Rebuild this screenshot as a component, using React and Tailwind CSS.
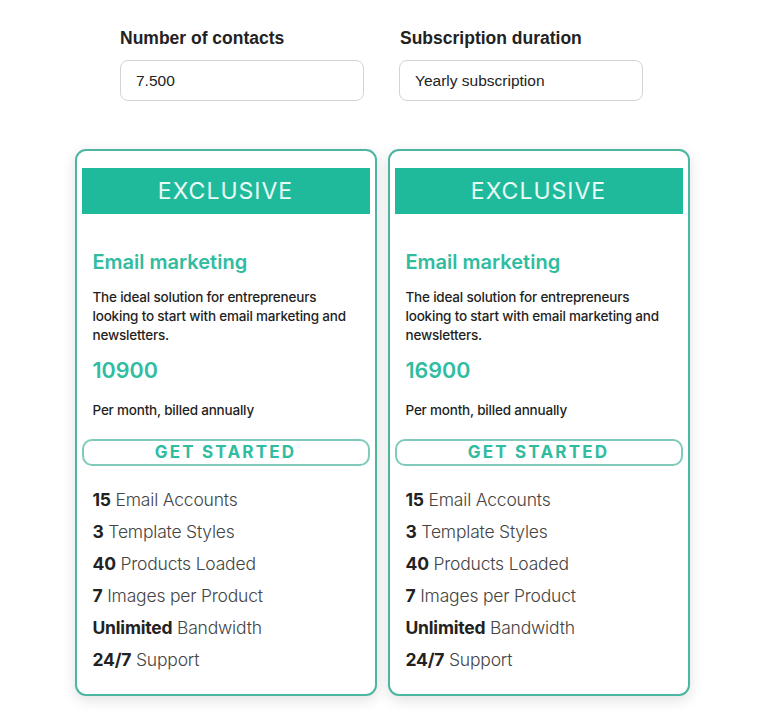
import React, { useState } from "react";

const plans = [
  { id: 1, price: "10900" },
  { id: 2, price: "16900" },
];

const features = [
  { strong: "15", text: "Email Accounts" },
  { strong: "3", text: "Template Styles" },
  { strong: "40", text: "Products Loaded" },
  { strong: "7", text: "Images per Product" },
  { strong: "Unlimited", text: "Bandwidth" },
  { strong: "24/7", text: "Support" },
];

const PlanCard = ({ price }) => (
  <div className="w-[302px] h-[547px] rounded-[11px] border-2 border-[#4db6a0] bg-white shadow-[0_4px_14px_rgba(0,0,0,0.12)] px-[5px] pt-[17px] font-['Inter',sans-serif]">
    <div className="h-[46px] bg-[#1fba9b] flex items-center justify-center text-[23px] tracking-[1px] text-[#e8fbf5]">
      EXCLUSIVE
    </div>

    <div className="px-[11px]">
      <h3 className="mt-[36px] text-[20px] leading-[24px] font-semibold text-[#2fbc9f]">
        Email marketing
      </h3>
      <p className="mt-[14px] w-[268px] text-[13.5px] leading-[19px] font-medium text-[#1f1f1f] tracking-[-0.2px]">
        The ideal solution for entrepreneurs looking to start with email
        marketing and newsletters.
      </p>
      <div className="mt-[12px] text-[21.5px] leading-[26px] font-semibold text-[#2fbc9f]">
        {price}
      </div>
      <div className="mt-[18px] text-[13.5px] leading-[18px] font-medium text-[#1f1f1f] tracking-[-0.2px]">
        Per month, billed annually
      </div>
    </div>

    <button className="mt-[20px] w-full h-[27px] rounded-[10px] border-2 border-[#7fcabb] flex items-center justify-center text-[17px] font-bold tracking-[2.2px] text-[#2fbc9f]">
      GET STARTED
    </button>

    <ul className="mt-[22px] px-[11px] flex flex-col gap-[9px]">
      {features.map((f) => (
        <li
          key={f.text}
          className="text-[17.5px] leading-[23px] text-[#444] tracking-[-0.2px]"
        >
          <span className="font-bold text-[#222]">{f.strong}</span>{" "}
          <span className="font-light">{f.text}</span>
        </li>
      ))}
    </ul>
  </div>
);

const App = () => {
  const [contacts, setContacts] = useState("7.500");
  const [duration, setDuration] = useState("Yearly subscription");

  return (
    <div className="min-h-screen bg-white pt-[28px] font-['Liberation_Sans',Arial,sans-serif]">
      {/* --- FILTERS --- */}
      <div className="flex justify-center gap-[35px]">
        <div className="w-[244px]">
          <label className="block text-[17.5px] leading-[20px] font-bold text-[#222]">
            Number of contacts
          </label>
          <input
            value={contacts}
            onChange={(e) => setContacts(e.target.value)}
            className="mt-[12px] w-full h-[41px] rounded-[8px] border border-[#d4d4d4] px-[15px] text-[15.5px] text-[#222] outline-none"
          />
        </div>
        <div className="w-[244px]">
          <label className="block text-[17.5px] leading-[20px] font-bold text-[#222] pl-[1px]">
            Subscription duration
          </label>
          <input
            value={duration}
            onChange={(e) => setDuration(e.target.value)}
            className="mt-[12px] w-full h-[41px] rounded-[8px] border border-[#d4d4d4] px-[15px] text-[15.5px] text-[#222] outline-none"
          />
        </div>
      </div>

      {/* --- PLANS --- */}
      <div className="mt-[48px] flex justify-center gap-[11px] ml-[1px]">
        {plans.map((p) => (
          <PlanCard key={p.id} price={p.price} />
        ))}
      </div>
    </div>
  );
};

export default App;
